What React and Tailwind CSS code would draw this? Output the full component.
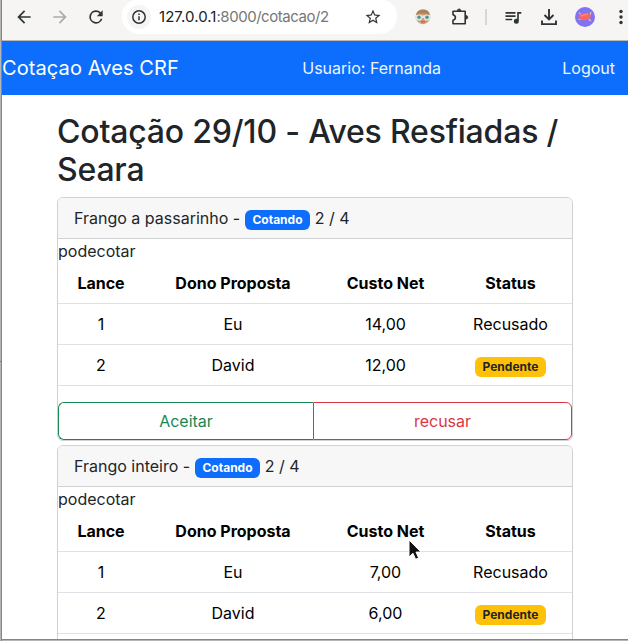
import React from 'react';

const quotes = [
  { name: 'Frango a passarinho', actions: true, rows: [['1', 'Eu', '14,00', 'Recusado'], ['2', 'David', '12,00', 'Pendente']] },
  { name: 'Frango inteiro', actions: false, rows: [['1', 'Eu', '7,00', 'Recusado'], ['2', 'David', '6,00', 'Pendente']] },
];

function Toolbar() {
  return (
    <div className="flex h-[41px] shrink-0 items-start border-b border-[#bdb8b3] bg-[#f6f5f4] pl-2.5 text-[#2e3436]">
      <div className="flex h-[34px] items-center">
        <svg className="ml-0.5 h-5 w-5" viewBox="0 0 24 24" fill="currentColor"><path d="M20 11H7.83l5.59-5.59L12 4l-8 8 8 8 1.41-1.41L7.83 13H20z" /></svg>
        <svg className="ml-4 h-5 w-5 text-[#a9aaaa]" viewBox="0 0 24 24" fill="currentColor"><path d="M4 11h12.17l-5.59-5.59L12 4l8 8-8 8-1.41-1.41L16.17 13H4z" /></svg>
        <svg className="ml-4 h-5 w-5" viewBox="0 0 24 24" fill="currentColor"><path d="M17.65 6.35A8 8 0 1 0 19.73 14h-2.08A6 6 0 1 1 12 6c1.66 0 3.14.69 4.22 1.78L13 11h7V4z" /></svg>
      </div>
      <div className="ml-4 flex h-[34px] w-[275px] items-center rounded-b-[17px] rounded-t-[15px] bg-white pl-[5px]">
        <div className="flex h-6 w-6 items-center justify-center rounded-full bg-[#f6f5f4]">
          <svg className="h-4 w-4" viewBox="0 0 16 16" fill="none" stroke="currentColor" strokeWidth="1.5"><circle cx="8" cy="8" r="6.2" /><path d="M8 7.2v4M8 4.4V6" /></svg>
        </div>
        <div className="ml-2 w-[172px] text-[15px] leading-6 tracking-[-0.46px] whitespace-nowrap text-[#777]"><span className="tracking-[0.05px] text-[#222]">127.0.0.1</span>:8000/cotacao/2</div>
        <svg className="ml-[33px] h-[18px] w-[18px] shrink-0" viewBox="0 0 24 24" fill="currentColor"><path d="m22 9.24-7.19-.62L12 2 9.19 8.63 2 9.24l5.46 4.73L5.82 21 12 17.27 18.18 21l-1.63-7.03zM12 15.4l-3.76 2.27 1-4.28-3.32-2.88 4.38-.38L12 6.1l1.71 4.04 4.38.38-3.32 2.88 1 4.28z" /></svg>
      </div>
      <div className="flex h-[34px] items-center">
        <svg className="ml-[18px] h-4 w-4" viewBox="0 0 16 16">
          <circle cx="8" cy="8" r="7.2" fill="#d99772" />
          <path d="M1 6.500C1.500 2 4.500.6 8 .6s6.500 1.400 7 5.900l-3-2H4z" fill="#a58658" />
          <path d="M0 6.300 4 5.500l4 1 4-1 4 .8v3.200l-2 2h-4L8.600 9H7.400L6 11.500H2l-2-2z" fill="#dce6e2" />
          <circle cx="4" cy="8.300" r="1.700" fill="#4f8f99" /><circle cx="12" cy="8.300" r="1.700" fill="#4f8f99" />
          <path d="M6 12.800h4" stroke="#a95f4e" />
        </svg>
        <svg className="ml-5 h-[18px] w-[18px]" viewBox="0 0 18 18" fill="none" stroke="currentColor" strokeWidth="1.6"><path d="M2 3.300h12.200v12.400H2v-3.500c3.200-.8 3.200-4.600 0-5.400z" strokeLinejoin="round" /><path d="M6.300 2.700a1.800 1.800 0 0 1 3.600 0zM15 7.500a1.800 1.800 0 0 1 0 3.600z" fill="currentColor" strokeWidth=".7" /></svg>
        <div className="ml-4 h-4 w-0.5 bg-[#d9d7d1]" />
        <svg className="ml-4 h-5 w-5" viewBox="0 0 24 24" fill="currentColor"><path d="M15 6H3v2h12zm0 4H3v2h12zM3 16h8v-2H3zM17 6v8.18c-.31-.11-.65-.18-1-.18a3 3 0 1 0 3 3V8h3V6z" /></svg>
        <svg className="ml-4 h-5 w-5" viewBox="0 0 20 20" fill="none" stroke="currentColor" strokeWidth="1.9"><path d="M10 2v10M5.5 8l4.5 4.5L14.500 8M3 13.500v3.600h14v-3.600" /></svg>
        <svg className="ml-4 h-5 w-5" viewBox="0 0 20 20">
          <circle cx="10" cy="10" r="10" fill="#8173f2" />
          <path d="m4 5.500 2 2.500m10-3-1 3M3.500 12.500l3-.5m7 0 2.500 2" stroke="#d3c3c9" strokeWidth="1.200" />
          <ellipse cx="9.800" cy="9.500" rx="6.200" ry="3.500" fill="#fa6661" transform="rotate(-10 10 10)" />
          <path d="m6 9 7-2" stroke="#ff9478" />
        </svg>
        <svg className="ml-6 h-4 w-1 shrink-0" viewBox="0 0 4 16" fill="currentColor"><circle cx="2" cy="2.500" r="1.700" /><circle cx="2" cy="8" r="1.700" /><circle cx="2" cy="13.500" r="1.700" /></svg>
      </div>
    </div>
  );
}

const badge = 'inline-block rounded-md px-[7.8px] py-[4.2px] text-center align-baseline text-xs leading-3 font-bold';

function QuoteCard({ quote }) {
  return (
    <section className="mb-1 h-[244px] rounded-md border border-[#d0d1d2]">
      <h2 className="h-[41px] rounded-t-[5px] border-b border-[#d0d1d2] bg-[#f7f7f7] px-4 py-2 text-base leading-6">
        {quote.name} - <span className={badge + ' bg-[#0d6efd] text-white'}>Cotando</span> 2 / 4
      </h2>
      <p className="h-6 leading-6">podecotar</p>
      <table className="mb-4 w-full table-fixed border-separate border-spacing-0 text-center text-black">
        <colgroup><col className="w-[86px]" /><col className="w-[178px]" /><col className="w-[127px]" /><col /></colgroup>
        <thead>
          <tr className="h-[41px]">
            {['Lance', 'Dono Proposta', 'Custo Net', 'Status'].map((h) => <th key={h} className="border-b border-[#dee2e6] p-0 font-bold">{h}</th>)}
          </tr>
        </thead>
        <tbody>
          {quote.rows.map((row) => (
            <tr key={row[0]} className="h-[41px]">
              {row.map((cell, i) => (
                <td key={i} className="h-[41px] border-b border-[#dee2e6] p-0 leading-6">
                  {cell === 'Pendente' ? <span className={badge + ' bg-[#ffc107] text-[#212529]'}>{cell}</span> : cell}
                </td>
              ))}
            </tr>
          ))}
        </tbody>
      </table>
      {quote.actions && (
        <div className="flex h-[38px]">
          <button className="w-[255px] rounded-l-md border border-r-0 border-[#198754] text-[#198754]">Aceitar</button>
          <button className="flex-1 rounded-r-md border border-[#dc3545] text-[#dc3545]">recusar</button>
        </div>
      )}
    </section>
  );
}

export default function App() {
  return (
    <div className="relative flex h-[641px] w-[628px] overflow-hidden bg-white font-['Inter','Liberation_Sans',sans-serif] text-base text-[#212529]">
      <div className="flex w-0.5 shrink-0 flex-col border-r border-[#858585] bg-[#b5b5b5]">
        <div className="mt-[361px] h-px bg-[#777]" />
      </div>
      <div className="flex min-w-0 flex-1 flex-col">
        <Toolbar />
        <nav className="flex h-[54px] shrink-0 items-center justify-between bg-[#0d6efd] pr-[13px] text-[#eef5ff]">
          <span className="w-[179px] text-xl tracking-[0.1px] text-white">Cotaçao Aves CRF</span>
          <span>Usuario: Fernanda</span>
          <span>Logout</span>
        </nav>
        <main className="min-h-0 flex-1 overflow-hidden pt-[18px] pr-[55px] pl-[55px]">
          <h1 className="mb-2 h-[76px] text-[32px] leading-[38px] font-medium tracking-[-0.2px]">Cotação 29/10 - Aves Resfiadas / Seara</h1>
          {quotes.map((quote) => <QuoteCard key={quote.name} quote={quote} />)}
        </main>
        <div className="h-0.5 shrink-0 border-t border-[#858585] bg-[#b5b5b5]" />
      </div>
      <svg className="absolute top-[539px] left-[407px] h-[22px] w-[15px]" viewBox="0 0 15 22"><path d="M2 1v17l4-3.700 2.600 6 3-1.300-2.600-5.900h5z" fill="#111" stroke="#fff" /></svg>
    </div>
  );
}
